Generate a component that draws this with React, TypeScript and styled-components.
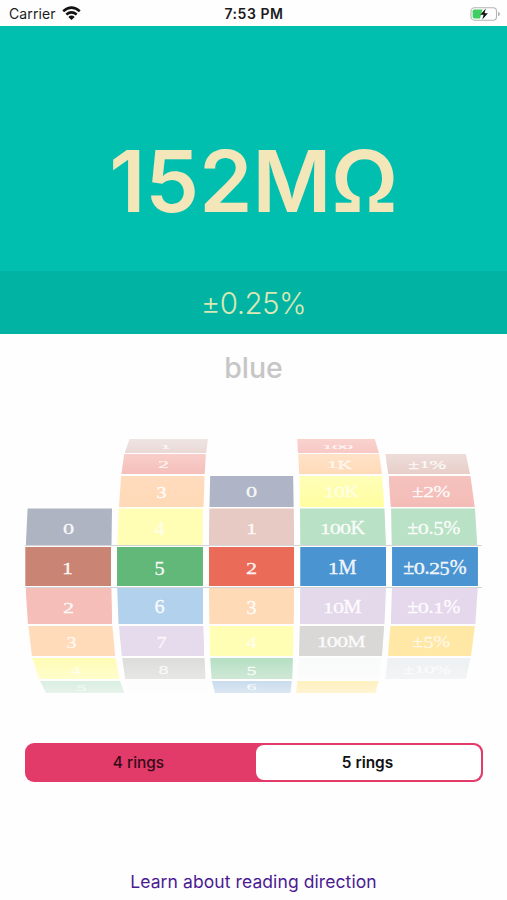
import React from 'react';
import styled, { createGlobalStyle } from 'styled-components';

const GlobalStyle = createGlobalStyle`
  * { box-sizing: border-box; }
  body { margin: 0; background: #fff; font-family: Inter, "Liberation Sans", sans-serif; }
`;

const Screen = styled.main`
  width: 507px;
  height: 900px;
  display: flex;
  flex-direction: column;
  overflow: hidden;
  background: #fefefe;
`;

const StatusBar = styled.header`
  height: 26px;
  flex: none;
  display: grid;
  grid-template-columns: 1fr auto 1fr;
  align-items: center;
  padding: 1px 6px 0 9px;
  font-size: 14px;
  color: #1c1c1c;
`;

const Carrier = styled.div`
  display: flex;
  align-items: center;
  gap: 6px;
  letter-spacing: 0.1px;
`;

const Clock = styled.div`
  font-weight: 600;
  letter-spacing: 0.55px;
  margin-right: 2px;
`;

const BatterySlot = styled.div`
  display: flex;
  justify-content: flex-end;
`;

const Reading = styled.section`
  height: 245px;
  flex: none;
  display: flex;
  justify-content: center;
  padding-top: 103px;
  background: #00bfae;
  color: #f3e6b8;
  font-size: 85.5px;
  line-height: 104px;
  font-weight: 570;
  letter-spacing: 0;
`;

const Tolerance = styled.section`
  height: 63px;
  flex: none;
  display: flex;
  justify-content: center;
  padding-top: 14px;
  background: #00b3a2;
  color: #d9e8b5;
  font-size: 29.5px;
  line-height: 36px;
  font-weight: 300;
  letter-spacing: -0.55px;
`;

const ColorName = styled.div`
  height: 105px;
  flex: none;
  padding-top: 16px;
  text-align: center;
  font-size: 28.5px;
  line-height: 36px;
  font-weight: 500;
  letter-spacing: -0.1px;
  color: #c6c6c6;
`;

const Picker = styled.section`
  position: relative;
  height: 254px;
  flex: none;
  display: grid;
  grid-template-columns: repeat(5, 91.7px);
  padding-left: 25px;
`;

const SelectionLines = styled.div`
  position: absolute;
  left: 25px;
  top: 106.2px;
  width: 457px;
  height: 42.6px;
  border-top: 1px solid #d3d5d6;
  border-bottom: 1px solid #d3d5d6;
`;

const Wheel = styled.div`
  position: relative;
  display: grid;
  grid-template-rows: 14.7px 22.3px 32.5px 38.5px 41px 38px 32px 23px 12px;
`;

const Cell = styled.div<{
  $row: number;
  $x: number;
  $w: number;
  $clip: string;
  $fill: string;
  $end?: string;
}>`
  grid-row: ${p => p.$row + 1};
  margin: 0 0 ${p => (p.$row === 8 ? 0 : p.$row === 0 ? 0.7 : 1.6)}px ${p => p.$x}px;
  width: ${p => p.$w}px;
  min-height: 0;
  display: flex;
  align-items: center;
  justify-content: center;
  overflow: hidden;
  background: linear-gradient(${p => p.$fill}, ${p => p.$end ?? p.$fill});
  clip-path: polygon(${p => p.$clip});
`;

const Label = styled.span<{ $squash: number; $alpha: number }>`
  display: block;
  flex: none;
  font-family: "Liberation Serif", serif;
  font-size: 20px;
  line-height: 22px;
  white-space: nowrap;
  color: rgba(255, 255, 255, ${p => p.$alpha});
  -webkit-text-stroke: 0.4px rgba(255, 255, 255, ${p => p.$alpha});
  transform: translateX(-0.5px) scale(1.01, ${p => p.$squash});
`;

const Glyph = styled.span<{ $kind: 'short' | 'low' | 'tall' }>`
  display: inline-block;
  transform-origin: 50% 17px;
  transform: ${p =>
    p.$kind === 'short' ? 'scale(1.1, 0.8)' : p.$kind === 'low' ? 'translateY(1.5px) scaleY(0.98)' : 'none'};
`;

const Segments = styled.div`
  width: 458px;
  height: 39px;
  flex: none;
  margin: 50px 0 0 25px;
  padding: 2px;
  display: grid;
  grid-template-columns: 1fr 1fr;
  border-radius: 9px;
  background: #e23a69;
`;

const Segment = styled.button<{ $active?: boolean }>`
  border: 0;
  padding: 0 ${p => (p.$active ? 2 : 4)}px 0 0;
  margin-left: ${p => (p.$active ? 2 : 0)}px;
  border-radius: 8px;
  background: ${p => (p.$active ? '#fff' : 'transparent')};
  color: ${p => (p.$active ? '#111' : '#350a18')};
  font-family: inherit;
  font-size: 15.4px;
  font-weight: ${p => (p.$active ? 600 : 500)};
`;

const LearnLink = styled.a`
  margin: 88px auto 0;
  font-size: 17.5px;
  line-height: 24px;
  letter-spacing: 0.09px;
  color: #4b1a92;
  text-decoration: none;
`;

type Band = {
  row: number;
  text: string;
  fill: string;
  end?: string;
  // Left and right edges at the top, then at the bottom of the band.
  edge: [number, number, number, number];
  alpha?: number;
};

const squash = [0.42, 0.65, 0.85, 0.97, 1, 0.97, 0.85, 0.65, 0.42];
const origins = [25, 116.7, 208.4, 300.1, 391.8];

const wheels: Band[][] = [
  [
    { row: 3, text: '0', fill: '#afb4c3', edge: [27.6, 112, 25.8, 111.5] },
    { row: 4, text: '1', fill: '#c98474', edge: [25.3, 111.3, 25.3, 111.3] },
    { row: 5, text: '2', fill: '#f5beb8', edge: [25.6, 111.4, 28, 112.2] },
    { row: 6, text: '3', fill: '#ffdbb9', edge: [28.4, 112.4, 32, 115.2], alpha: 0.75 },
    { row: 7, text: '4', fill: '#fffcb5', end: '#fffdcb', edge: [32.4, 115.6, 39, 119.6], alpha: 0.6 },
    { row: 8, text: '5', fill: '#d9eee1', end: '#e7f3eb', edge: [40, 120, 46, 124.5], alpha: 0.5 },
  ],
  [
    { row: 0, text: '1', fill: '#eee4e2', end: '#ead9d6', edge: [129.6, 208, 124.6, 206.2], alpha: 0.8 },
    { row: 1, text: '2', fill: '#f8ceca', end: '#f5bfba', edge: [124.3, 206, 121.3, 204.7], alpha: 0.75 },
    { row: 2, text: '3', fill: '#ffdcbe', end: '#ffd9b6', edge: [121.1, 204.6, 119, 203.6] },
    { row: 3, text: '4', fill: '#fffeb4', edge: [118.8, 203.5, 117.3, 202.8], alpha: 0.65 },
    { row: 4, text: '5', fill: '#61b879', edge: [117, 203, 117, 203] },
    { row: 5, text: '6', fill: '#b1d1ec', edge: [117.2, 203, 118.6, 203.2] },
    { row: 6, text: '7', fill: '#e6daed', edge: [119, 203.3, 121.8, 204.4], alpha: 0.75 },
    { row: 7, text: '8', fill: '#dcdcda', end: '#e7e7e6', edge: [122.2, 204.6, 125.3, 205.6], alpha: 0.75 },
    { row: 8, text: '', fill: '#fdfdfd', edge: [126, 206, 130, 208] },
  ],
  [
    { row: 2, text: '0', fill: '#afb5c6', edge: [210.2, 293.2, 209.5, 293.7] },
    { row: 3, text: '1', fill: '#e8cac4', edge: [209.4, 293.8, 208.9, 294.2] },
    { row: 4, text: '2', fill: '#ea6b58', edge: [208.9, 294.5, 208.9, 294.5] },
    { row: 5, text: '3', fill: '#ffdab7', edge: [208.9, 294.3, 209.4, 293.8] },
    { row: 6, text: '4', fill: '#fffeb4', edge: [209.5, 293.6, 210, 293], alpha: 0.65 },
    { row: 7, text: '5', fill: '#b5dfc3', end: '#cfe8d6', edge: [210.2, 292.9, 211.6, 292.3], alpha: 0.8 },
    { row: 8, text: '6', fill: '#c9dced', end: '#dbe7f2', edge: [212, 291.8, 215, 290.5], alpha: 0.75 },
  ],
  [
    { row: 0, text: '100', fill: '#f9d2ce', end: '#f8c8c4', edge: [297.2, 374.8, 298, 379], alpha: 0.75 },
    { row: 1, text: '1K', fill: '#ffe2c8', end: '#ffdab8', edge: [298.2, 379.2, 299.2, 382], alpha: 0.75 },
    { row: 2, text: '10K', fill: '#fffeb8', end: '#fffea0', edge: [299.4, 382.1, 300, 384.3], alpha: 0.65 },
    { row: 3, text: '100K', fill: '#b9e1c5', edge: [300, 384.5, 300.3, 386] },
    { row: 4, text: '1M', fill: '#4b94d2', edge: [300.3, 386.2, 300.3, 386.2] },
    { row: 5, text: '10M', fill: '#e4d8eb', edge: [300.2, 386, 300, 384.5] },
    { row: 6, text: '100M', fill: '#d9d8d7', edge: [299.8, 384.2, 299, 382] },
    { row: 7, text: '', fill: '#f9fafa', end: '#fcfcfc', edge: [298.8, 381.8, 297.6, 379] },
    { row: 8, text: '', fill: '#fff0bf', end: '#fff4d3', edge: [297.4, 378.6, 296, 375.5] },
  ],
  [
    { row: 1, text: '±1%', fill: '#edddd9', end: '#e8cec8', edge: [385.3, 465.8, 388.3, 470.2], alpha: 0.8 },
    { row: 2, text: '±2%', fill: '#f5c2be', end: '#f4bcb7', edge: [388.6, 470.5, 390.8, 474.8] },
    { row: 3, text: '±0.5%', fill: '#b9e1c5', edge: [391.1, 475, 391.8, 477.3] },
    { row: 4, text: '±0.25%', fill: '#4b94d2', edge: [392.1, 478, 392.1, 478] },
    { row: 5, text: '±0.1%', fill: '#e6d8ec', edge: [392, 477.8, 390.8, 475.4] },
    { row: 6, text: '±5%', fill: '#ffe8a6', edge: [390.4, 475, 388, 471], alpha: 0.65 },
    { row: 7, text: '±10%', fill: '#eef1f3', end: '#f2f4f5', edge: [387.7, 470.6, 385.3, 466], alpha: 0.7 },
  ],
];

const glyphKind = (c: string) =>
  '012'.includes(c) ? 'short' : '34579'.includes(c) ? 'low' : 'tall';

function WheelBand({ band, origin }: { band: Band; origin: number }) {
  const [tl, tr, bl, br] = band.edge;
  const left = Math.min(tl, bl);
  const right = Math.max(tr, br);
  const clip = `${tl - left}px 0, ${tr - left}px 0, ${br - left}px 100%, ${bl - left}px 100%`;
  return (
    <Cell
      $row={band.row}
      $x={left - origin}
      $w={right - left}
      $clip={clip}
      $fill={band.fill}
      $end={band.end}
    >
      <Label $squash={squash[band.row]} $alpha={band.alpha ?? 0.9}>
        {band.text.split('').map((c, i) => (
          <Glyph key={i} $kind={glyphKind(c)}>{c}</Glyph>
        ))}
      </Label>
    </Cell>
  );
}

function WifiIcon() {
  return (
    <svg width="19" height="15" viewBox="0 0 19 15" fill="none" stroke="#111" strokeWidth="2.5">
      <path d="M1.2 5.2Q9.5 -2 17.8 5.2" />
      <path d="M4.3 8.5Q9.5 4.2 14.7 8.5" />
      <path d="M9.5 14L6.3 10.9Q9.5 8.3 12.7 10.9Z" fill="#111" stroke="none" />
    </svg>
  );
}

function BatteryIcon() {
  return (
    <svg width="31" height="14" viewBox="0 0 31 14">
      <rect x="1" y="0.8" width="25.5" height="12.4" rx="3.4" fill="#fff" stroke="#b2b4b2" strokeWidth="1.1" />
      <path d="M4.3 2.5H12.5L10 11.5H4.3Q2.6 11.5 2.6 9.8V4.2Q2.6 2.5 4.3 2.5Z" fill="#3fce62" />
      <path d="M28 4.7Q30 5.5 30 7T28 9.3Z" fill="#b2b4b2" />
      <path d="M15.8 1.5L10.3 7.7H13.6L12.3 12.5L17.9 6.2H14.5Z" fill="#111" />
    </svg>
  );
}

export default function App() {
  return (
    <>
      <GlobalStyle />
      <Screen>
        <StatusBar>
          <Carrier>Carrier <WifiIcon /></Carrier>
          <Clock>7:53 PM</Clock>
          <BatterySlot><BatteryIcon /></BatterySlot>
        </StatusBar>
        <Reading>152MΩ</Reading>
        <Tolerance>±0.25%</Tolerance>
        <ColorName>blue</ColorName>
        <Picker>
          <SelectionLines />
          {wheels.map((bands, i) => (
            <Wheel key={i}>
              {bands.map(band => (
                <WheelBand key={band.row} band={band} origin={origins[i]} />
              ))}
            </Wheel>
          ))}
        </Picker>
        <Segments>
          <Segment>4 rings</Segment>
          <Segment $active>5 rings</Segment>
        </Segments>
        <LearnLink>Learn about reading direction</LearnLink>
      </Screen>
    </>
  );
}
